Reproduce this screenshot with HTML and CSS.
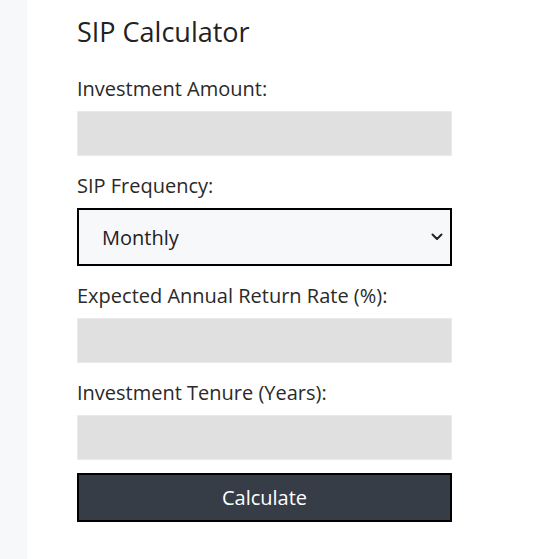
FILE: index.html
```html
<!DOCTYPE html>
<html>
<head>
<meta charset="utf-8">
<link rel="stylesheet" href="styles.css">
</head>
<body>
<div class="page">
  <div class="side"></div>
  <main class="card">
    <h1 class="title">SIP Calculator</h1>
    <form class="form">
      <label class="label" for="amt">Investment Amount:</label>
      <input class="field" id="amt" type="text">
      <label class="label" for="freq">SIP Frequency:</label>
      <div class="select-wrap">
        <select class="select" id="freq">
          <option>Monthly</option>
        </select>
        <svg class="chev" width="12" height="8" viewBox="0 0 12 8"><path d="M1.5 1.5 L6 6 L10.5 1.5" fill="none" stroke="#222" stroke-width="2" stroke-linecap="round" stroke-linejoin="round"/></svg>
      </div>
      <label class="label" for="rate">Expected Annual Return Rate (%):</label>
      <input class="field" id="rate" type="text">
      <label class="label" for="ten">Investment Tenure (Years):</label>
      <input class="field" id="ten" type="text">
      <button class="btn" type="button">Calculate</button>
    </form>
  </main>
</div>
</body>
</html>
```
FILE: styles.css
```css
html, body {
  margin: 0;
  padding: 0;
  background: #ffffff;
}
.page {
  display: flex;
  min-height: 559px;
  font-family: "Open Sans", "Noto Sans", sans-serif;
  color: #222;
}
.side {
  width: 27px;
  background: #f7f8fa;
  flex: none;
}
.card {
  padding: 14px 0 0 50px;
  width: 375px;
}
.title {
  margin: 0;
  font-size: 27px;
  font-weight: 400;
  line-height: 36px;
  color: #222;
}
.form {
  display: flex;
  flex-direction: column;
  margin-top: 26px;
}
.label {
  font-size: 20px;
  line-height: 26px;
  color: #2a2a2a;
  margin-bottom: 9px;
}
.field {
  box-sizing: border-box;
  height: 45px;
  width: 375px;
  border: 1px solid #eaeaea;
  background: #e0e0e0;
  margin: 0 0 17px 0;
  padding: 0;
}
.select-wrap {
  position: relative;
  margin-bottom: 17px;
}
.select {
  box-sizing: border-box;
  width: 375px;
  height: 58px;
  border: 2px solid #000;
  background: #f7f8fa;
  appearance: none;
  -webkit-appearance: none;
  font-family: inherit;
  font-size: 20px;
  color: #222;
  padding: 0 0 0 23px;
  border-radius: 0;
  display: block;
}
.chev {
  position: absolute;
  right: 9px;
  top: 25px;
}
.btn {
  box-sizing: border-box;
  width: 375px;
  height: 49px;
  border: 2px solid #000;
  background: #373d47;
  color: #fff;
  font-family: inherit;
  font-size: 20px;
  margin-top: -4px;
  padding: 0;
}
```
